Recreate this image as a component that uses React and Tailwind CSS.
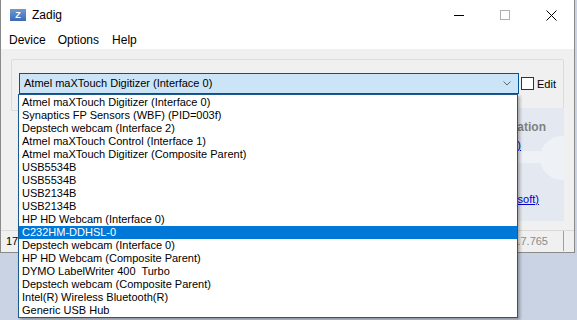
import React from "react";

const items = [
  "Atmel maXTouch Digitizer (Interface 0)",
  "Synaptics FP Sensors (WBF) (PID=003f)",
  "Depstech webcam (Interface 2)",
  "Atmel maXTouch Control (Interface 1)",
  "Atmel maXTouch Digitizer (Composite Parent)",
  "USB5534B",
  "USB5534B",
  "USB2134B",
  "USB2134B",
  "HP HD Webcam (Interface 0)",
  "C232HM-DDHSL-0",
  "Depstech webcam (Interface 0)",
  "HP HD Webcam (Composite Parent)",
  "DYMO LabelWriter 400  Turbo",
  "Depstech webcam (Composite Parent)",
  "Intel(R) Wireless Bluetooth(R)",
  "Generic USB Hub",
];

const ui = { fontFamily: '"Liberation Sans", Arial, sans-serif' };

export default function App() {
  return (
    <div className="relative w-[577px] h-[320px] overflow-hidden bg-[#c9d3e3]" style={ui}>
      {/* window */}
      <div className="flex flex-col w-[575px] h-[253px] border-l border-r border-b border-[#8a8a8a] bg-[#f0f0f0]">
        {/* title bar */}
        <div className="flex items-center h-[30px] bg-white">
          <div className="ml-[9px] w-[16px] h-[12px] bg-gradient-to-b from-[#6f9ad6] to-[#3c6bb3] flex items-center justify-center text-white text-[9px] font-bold leading-none">
            Z
          </div>
          <span className="ml-[6px] text-[12px] text-black">Zadig</span>
          <div className="ml-auto flex items-center h-full">
            <div className="w-[46px] h-full flex items-center justify-center">
              <div className="w-[10px] h-px bg-black" />
            </div>
            <div className="w-[46px] h-full flex items-center justify-center">
              <div className="w-[10px] h-[10px] border border-[#b0b0b0]" />
            </div>
            <div className="w-[46px] h-full flex items-center justify-center">
              <svg width="11" height="11" viewBox="0 0 11 11">
                <path d="M0.5 0.5L10.5 10.5M10.5 0.5L0.5 10.5" stroke="#000" strokeWidth="1" />
              </svg>
            </div>
          </div>
        </div>
        {/* menu bar */}
        <div className="flex items-center h-[19px] bg-white text-[12px] text-black">
          <span className="ml-[8px]">Device</span>
          <span className="ml-[12px]">Options</span>
          <span className="ml-[13px]">Help</span>
        </div>
        {/* client */}
        <div className="flex-1 flex flex-col pt-[10px]">
          <div className="mx-[10px] h-[52px] border border-[#dcdcdc] rounded-[2px] flex items-start pt-[13px] pl-[7px]">
            <div className="w-[500px] h-[21px] bg-[#cce4f7] border border-[#005499] flex items-center pl-[4px] text-[11px] text-black">
              <span>Atmel maXTouch Digitizer (Interface 0)</span>
              <svg className="ml-auto mr-[7px]" width="8" height="5" viewBox="0 0 8 5">
                <path d="M0.5 0.5L4 4L7.5 0.5" fill="none" stroke="#666" strokeWidth="1" />
              </svg>
            </div>
            <div className="ml-[2px] mt-[4px] w-[13px] h-[13px] border border-[#333] bg-white" />
            <span className="ml-[3px] mt-[3px] text-[11px] text-black">Edit</span>
          </div>
          <div className="flex mx-[10px] mt-[-3px] h-[113px]">
            <div className="flex-1" />
            <div className="relative w-[160px] h-[113px] bg-[#e4e9f1] overflow-hidden flex flex-col items-end pr-[18px] pt-[10px] text-[11px]">
              <div className="absolute right-[-20px] top-[28px] w-[44px] h-[44px] rounded-full bg-[#eef1f6]" />
              <div className="absolute right-[10px] top-[43px] w-[60px] h-[12px] bg-[#eef1f6]" />
              <span className="relative font-bold text-[#808080] text-[12px]">More Information</span>
              <span className="relative text-[#0000cc] underline mt-[1px] mr-[25px]">WinUSB (libusb)</span>
              <span className="relative text-[#0000cc] underline mt-[37px] mr-[7px]">WinUSB (Microsoft)</span>
            </div>
          </div>
          {/* status bar */}
          <div className="mt-auto flex h-[21px] mb-px border-t border-[#d9d9d9] text-[11px]">
            <div className="flex-1 flex items-center pl-[5px] border-r border-[#d9d9d9] text-black">17 devices found.</div>
            <div className="w-[100px] flex items-center justify-end pr-[15px] text-[#8a8a8a] border-r border-[#a0a0a0] mr-[10px]">Zadig 2.7.765</div>
          </div>
        </div>
      </div>

      {/* dropdown list overlay */}
      <div className="absolute left-[18px] top-[94px] w-[500px] h-[224px] bg-white border border-[#1d5a8e] shadow-[2px_2px_3px_rgba(0,0,0,0.3)] pt-px">
        {items.map((t, i) => (
          <div
            key={i}
            className={
              "h-[13px] leading-[13px] pl-[3px] text-[11px] whitespace-pre " +
              (i === 10 ? "bg-[#0078d7] text-white" : "text-black")
            }
          >
            {t}
          </div>
        ))}
      </div>
    </div>
  );
}
